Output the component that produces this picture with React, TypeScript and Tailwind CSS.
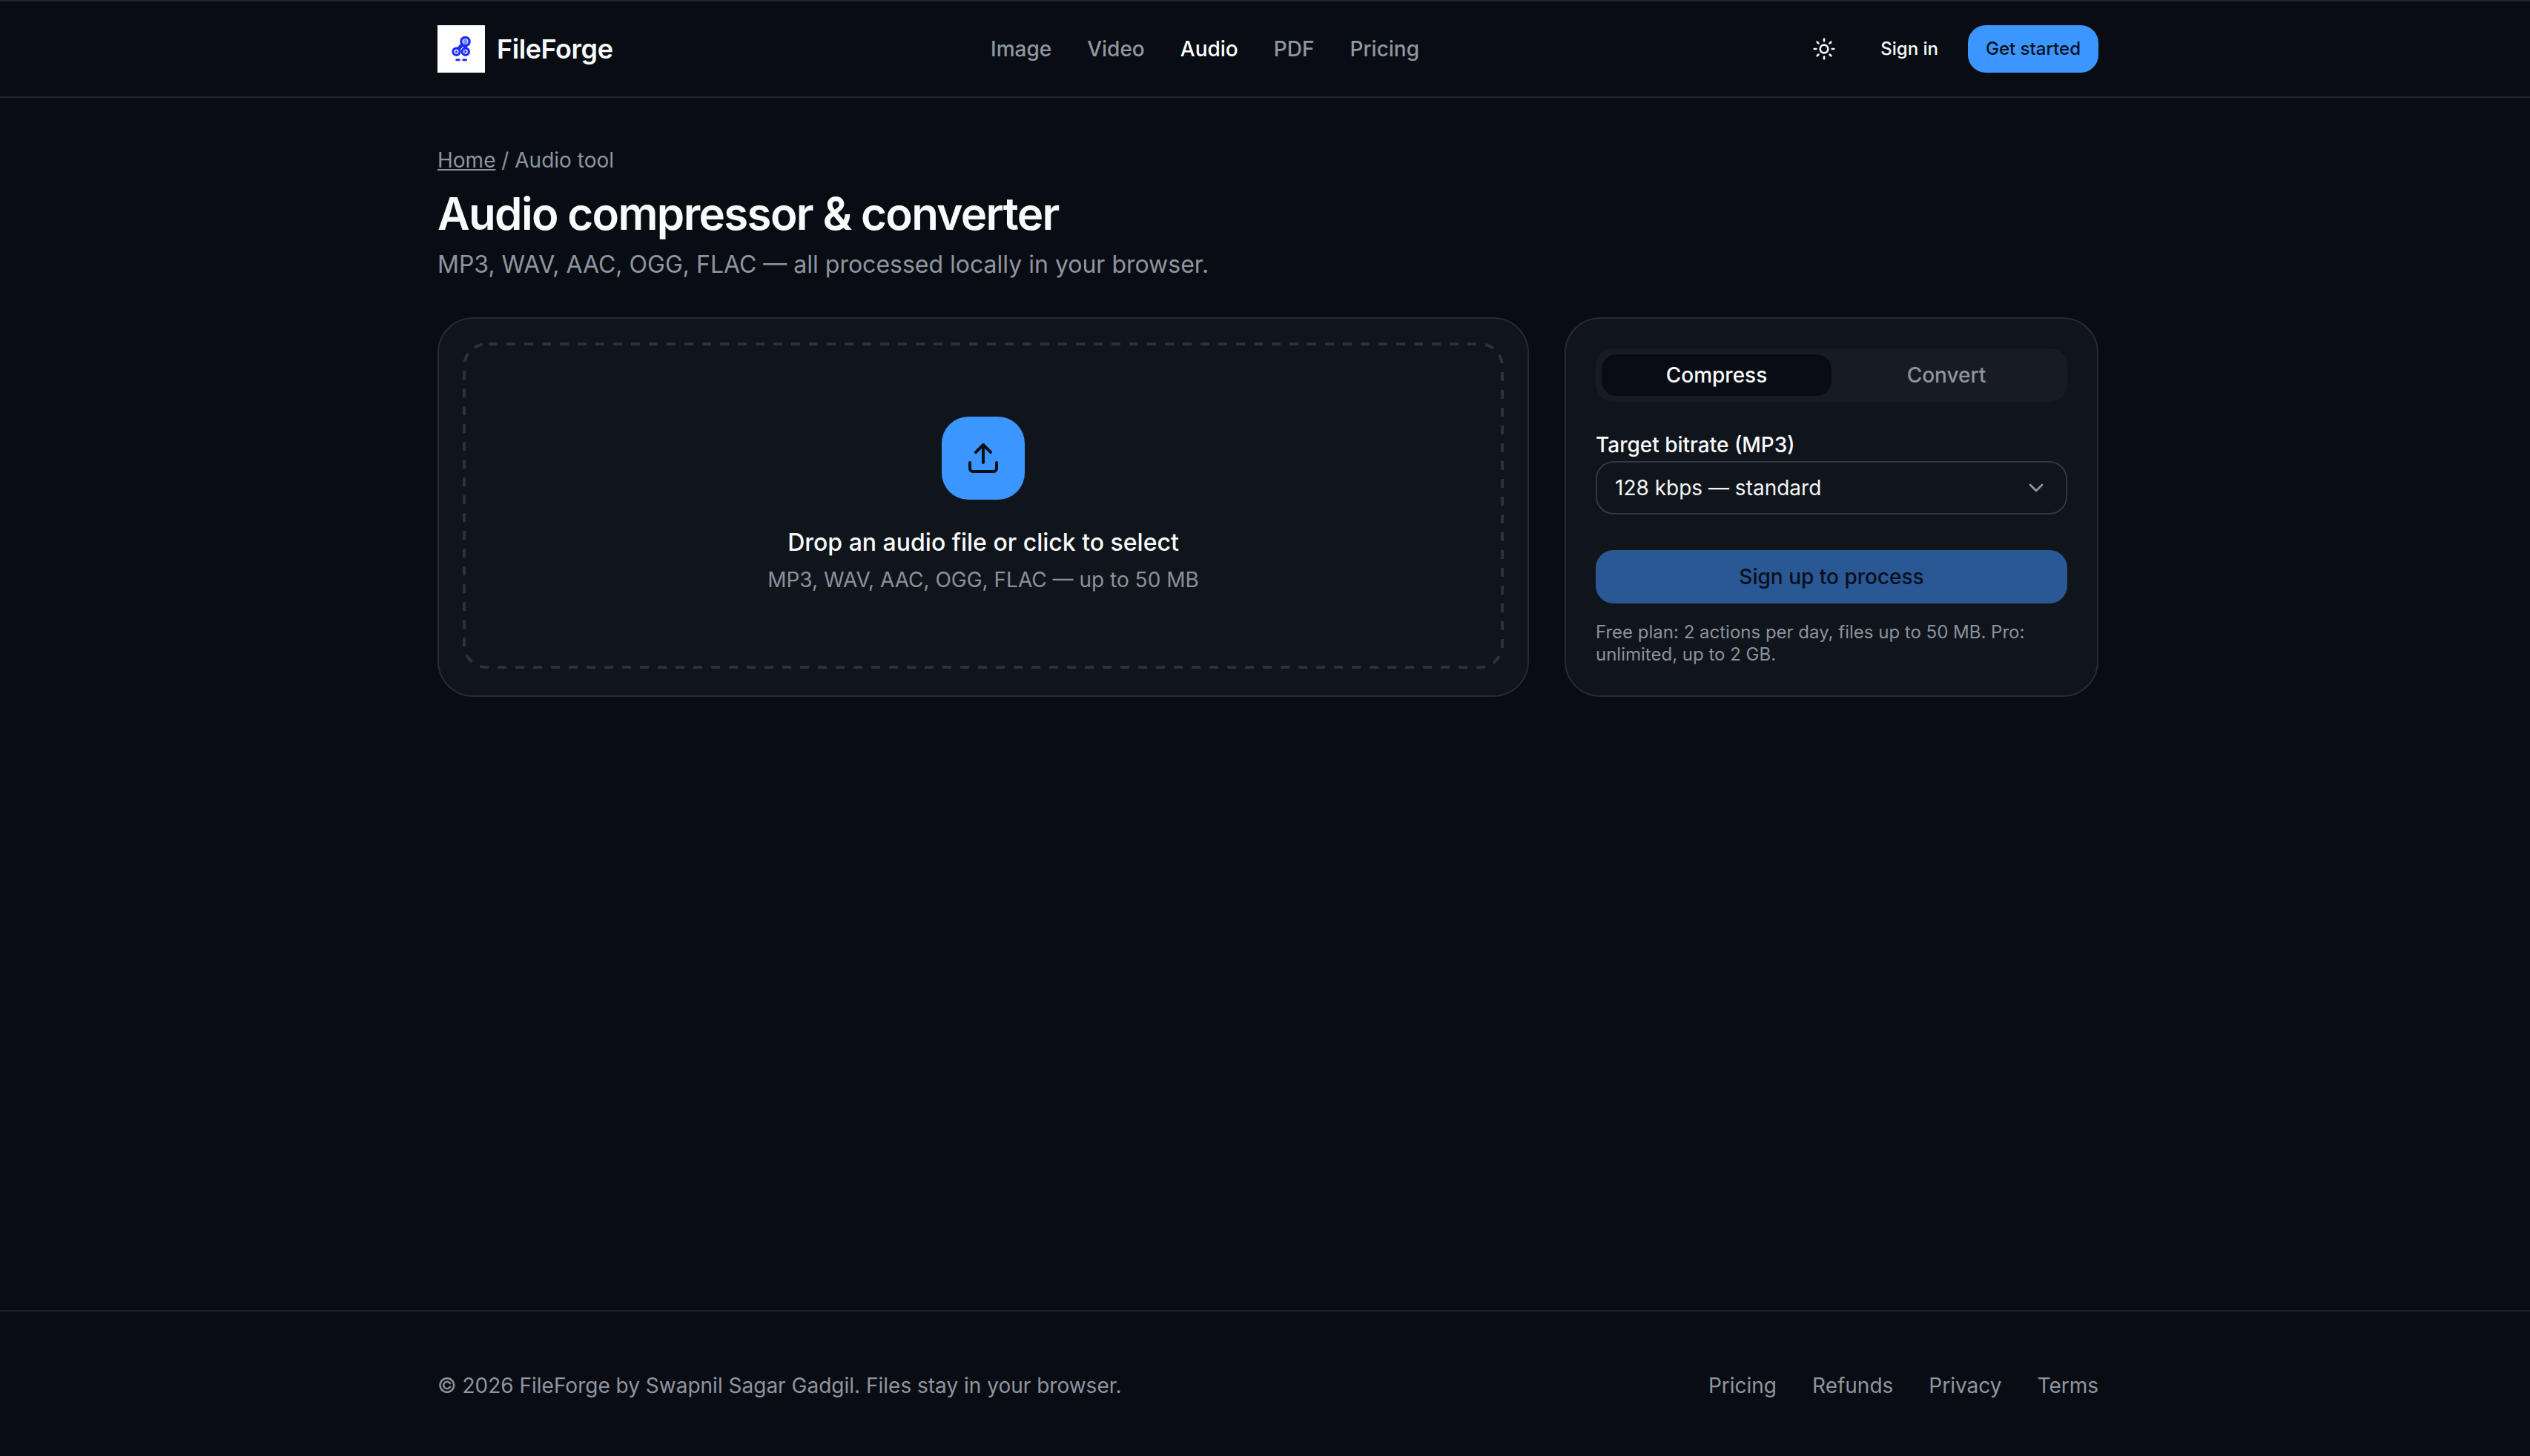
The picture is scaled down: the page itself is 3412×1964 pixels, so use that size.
import { ChevronDown, Sun, Upload } from "lucide-react";

function Logo() {
  return (
    <div className="flex h-16 w-16 shrink-0 items-center justify-center bg-white">
      <svg width="64" height="64" viewBox="0 0 64 64" fill="none">
        <path d="M34 26 L28 32 M37.5 27 L37.5 32" stroke="#1c2cf5" strokeWidth="5" />
        <circle cx="37.5" cy="22" r="5.6" fill="white" stroke="#1c2cf5" strokeWidth="3.4" />
        <path d="M35 18.6h3.2l2.2 2.2v5h-5.4z" fill="#1c2cf5" opacity="0.55" />
        <circle cx="25.5" cy="35.7" r="4.6" fill="white" stroke="#1c2cf5" strokeWidth="3.2" />
        <circle cx="25.5" cy="35.7" r="1.5" fill="#1c2cf5" />
        <circle cx="37.8" cy="35.7" r="4.6" fill="white" stroke="#1c2cf5" strokeWidth="3.2" />
        <path d="M36.4 33.2l3.6 2.5-3.6 2.5z" fill="#1c2cf5" />
        <rect x="24.3" y="45.3" width="6.4" height="3" rx="1.5" fill="#1c2cf5" />
        <rect x="33.3" y="45.3" width="6.7" height="3" rx="1.5" fill="#1c2cf5" />
      </svg>
    </div>
  );
}

function Header() {
  return (
    <header className="h-[132px] border-y-2 border-[#20252c]">
      <div className="ml-[590px] flex h-full w-[2240px] items-center">
        <a className="flex w-[236px] items-center gap-4">
          <Logo />
          <span className="text-[36px] font-semibold tracking-[-0.45px] text-[#f8fafc]">FileForge</span>
        </a>
        <nav className="ml-[510px] flex items-center gap-12 text-[28px] font-medium text-[#9097a1]">
          <a>Image</a>
          <a>Video</a>
          <a className="text-white">Audio</a>
          <a>PDF</a>
          <a>Pricing</a>
        </nav>
        <div className="ml-auto flex items-center">
          <Sun size={32} strokeWidth={2} className="text-[#f4f5f7]" />
          <a className="ml-[60px] text-[24px] font-medium text-[#f8fafc]">Sign in</a>
          <button className="ml-10 flex h-16 w-[176px] items-center justify-center rounded-3xl bg-[#3b96ff] text-[24px] font-medium text-[#0a0f1a]">
            Get started
          </button>
        </div>
      </div>
    </header>
  );
}

function Dropzone() {
  return (
    <div className="flex-1 rounded-[48px] border-2 border-[#262b33] bg-[#10151c] px-8 pt-8 pb-9">
      <div className="relative flex h-full flex-col items-center justify-center">
        {/* svg instead of border-dashed, chrome's dash is too short */}
        <svg className="absolute inset-0 h-full w-full" fill="none">
          <rect
            x="2"
            y="2"
            width="1400"
            height="436"
            rx="30"
            stroke="#2d323a"
            strokeWidth="4"
            strokeDasharray="12 12"
            strokeDashoffset="-3"
          />
        </svg>
        <div className="flex h-28 w-28 items-center justify-center rounded-[36px] bg-[#3b96ff]">
          <Upload size={48} strokeWidth={2} className="text-[#0a0f1a]" />
        </div>
        <p className="mt-[34px] text-[32px] leading-[48px] font-medium text-[#f8fafc]">
          Drop an audio file or click to select
        </p>
        <p className="mt-1.5 text-[28px] leading-10 text-[#8b919c]">
          MP3, WAV, AAC, OGG, FLAC — up to 50 MB
        </p>
      </div>
    </div>
  );
}

function Settings() {
  return (
    <div className="w-[720px] rounded-[48px] border-2 border-[#262b33] bg-[#10151c] p-10">
      <div className="flex h-[72px] rounded-3xl bg-[#171c24] p-2 text-[28px] font-medium">
        <button className="flex-1 rounded-[20px] bg-[#090d13] text-[#f8fafc]">Compress</button>
        <button className="flex-1 text-[#8f95a0]">Convert</button>
      </div>
      <label className="mt-[38px] block text-[28px] leading-10 font-medium text-[#f8fafc]">
        Target bitrate (MP3)
      </label>
      <div className="mt-0.5 flex h-[72px] items-center justify-between rounded-3xl border-2 border-[#33383f] px-6 text-[28px] text-[#f4f5f7]">
        <span>128 kbps — standard</span>
        <ChevronDown size={32} strokeWidth={2} className="text-[#9097a1]" />
      </div>
      <button className="mt-12 h-[72px] w-full rounded-3xl bg-[#295894] text-[28px] font-medium text-[#0a0f1a]">
        Sign up to process
      </button>
      <p className="mt-6 text-[24px] leading-[30px] text-[#8b919c]">
        Free plan: 2 actions per day, files up to 50 MB. Pro: unlimited, up to 2 GB.
      </p>
    </div>
  );
}

function Footer() {
  return (
    <footer className="h-[197px] border-t-2 border-[#20252c]">
      <div className="ml-[590px] flex h-full w-[2240px] items-center justify-between pt-1 text-[28px] text-[#8f95a0]">
        <span>© 2026 FileForge by Swapnil Sagar Gadgil. Files stay in your browser.</span>
        <div className="flex gap-12">
          <a>Pricing</a>
          <a>Refunds</a>
          <a>Privacy</a>
          <a>Terms</a>
        </div>
      </div>
    </footer>
  );
}

export default function App() {
  return (
    <div className="flex min-h-screen flex-col bg-[#090d13] font-['Inter',sans-serif]">
      <Header />
      <main className="ml-[590px] w-[2240px] flex-1 pt-16">
        <div className="text-[28px] leading-10 text-[#8f95a0]">
          <a className="underline">Home</a> / Audio tool
        </div>
        <h1 className="mt-4 text-[60px] leading-[72px] font-semibold tracking-[-1.65px] text-[#f8fafc]">
          Audio compressor &amp; converter
        </h1>
        <p className="mt-2.5 text-[32px] leading-[46px] text-[#8f95a0]">
          MP3, WAV, AAC, OGG, FLAC — all processed locally in your browser.
        </p>
        <div className="mt-12 flex gap-12">
          <Dropzone />
          <Settings />
        </div>
      </main>
      <Footer />
    </div>
  );
}
